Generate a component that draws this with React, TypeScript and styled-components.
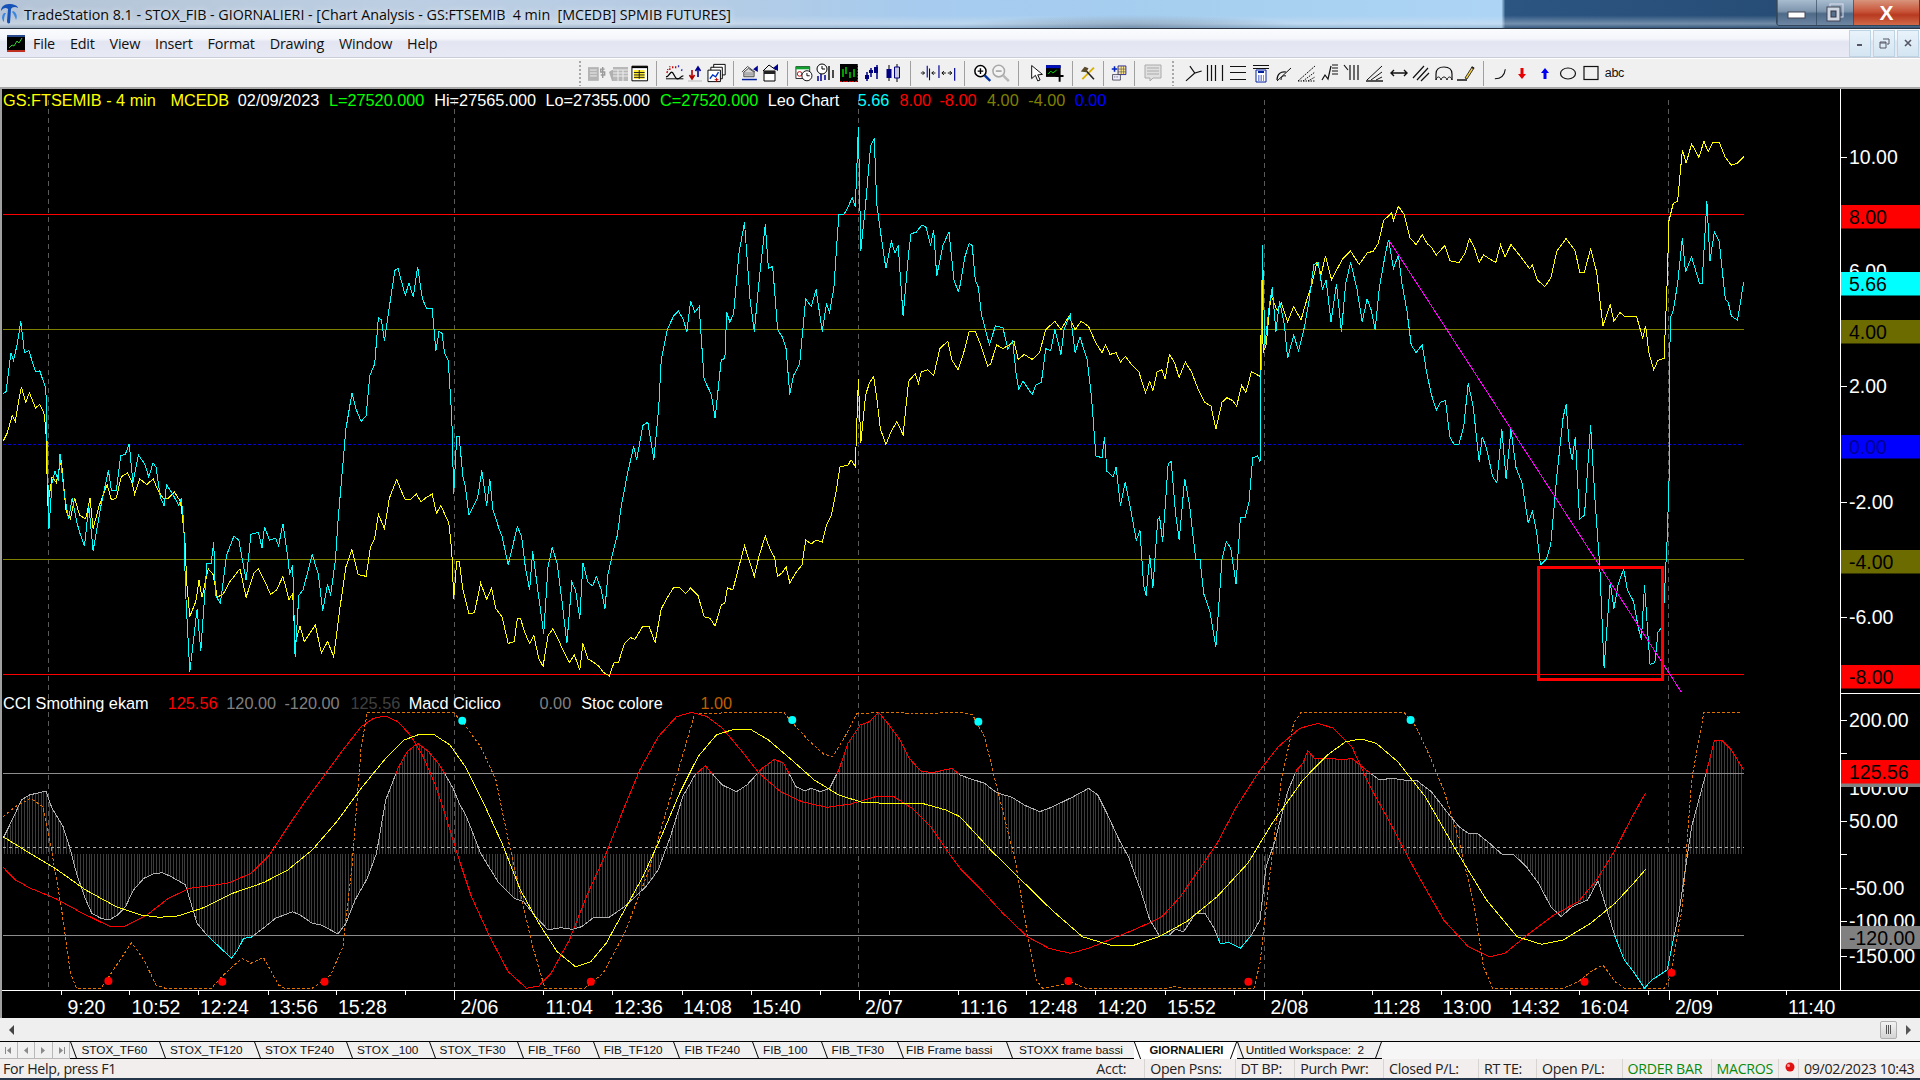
import React from "react";
import styled, { createGlobalStyle } from "styled-components";

const Global = createGlobalStyle`
  html, body { margin: 0; padding: 0; background: #000; overflow: hidden; }
  #root { width: 1920px; height: 1080px; }
`;

const UI = `"Open Sans", "Noto Sans", "Liberation Sans", sans-serif`;
const ARIAL = `"Liberation Sans", Arial, sans-serif`;

const SX = 1568 / 960;
const lx = (x: number) => x / SX;
const rx = (x: number) => 960 + x / SX;
const ty = (y: number) => 100 + y / (1568 / 600);
const by = (y: number) => 680 + y / 3;

type P = [number, number];
const conv = (a: number[], fx: (n: number) => number, fy: (n: number) => number): P[] => {
  const o: P[] = [];
  for (let i = 0; i < a.length; i += 2) o.push([fx(a[i]), fy(a[i + 1])]);
  return o;
};
const pts = (p: P[]) => p.map(([x, y]) => `${x.toFixed(1)},${y.toFixed(1)}`).join(" ");

const cyanL = [5,767,10,762,18,660,22,680,28,640,34,578,40,660,47,655,58,710,65,708,75,755,77,900,80,1120,85,1000,90,970,95,995,98,925,105,1030,112,1095,118,1040,125,1100,130,1130,138,1165,145,1060,152,1178,165,1060,177,968,182,1020,190,1020,197,930,205,925,211,898,217,1000,226,928,236,950,243,985,250,948,255,960,262,1040,268,1060,272,1005,282,1030,292,1060,296,1040,300,1100,303,1280,310,1495,322,1330,328,1440,338,1210,345,1210,349,1155,352,1295,360,1315,370,1190,382,1140,390,1150,402,1255,410,1135,422,1130,428,1170,432,1115,440,1150,450,1145,455,1165,462,1107,470,1195,473,1240,478,1215,482,1455,488,1295,495,1280,510,1188,520,1240,527,1335,535,1265,540,1295,548,1200,552,1100,565,860,575,765,582,810,590,840,598,825,604,720,612,690,618,568,623,575,628,630,636,540,645,445,650,440,655,470,662,510,668,478,675,515,682,436,690,520,697,545,706,545,712,655,717,605,722,610,726,660,732,680,738,830,741,1030,746,880,750,880,756,985,760,1010,766,1085,774,1060,780,1040,787,968,795,1060,800,990,805,1070,815,1120,820,1140,830,1215,845,1115,852,1140,858,1220,865,1280,870,1180,880,1300,888,1395,895,1220,902,1170,910,1210,918,1310,926,1420,934,1260,940,1280,947,1355,952,1210,960,1260,968,1270,974,1245,982,1280,988,1330,993,1240,1000,1190,1008,1140,1015,1060,1025,975,1035,905,1040,940,1050,850,1058,842,1068,940,1076,800,1080,680,1090,600,1100,565,1108,552,1115,570,1122,605,1128,525,1135,555,1142,540,1150,730,1162,770,1168,832,1178,680,1184,675,1187,555,1192,580,1198,560,1207,400,1216,320,1225,520,1232,605,1240,470,1250,325,1255,440,1262,435,1270,600,1278,620,1284,650,1290,770,1296,720,1306,690,1316,520,1325,540,1333,495,1343,605,1350,532,1355,555,1362,490,1370,300,1378,300,1385,280,1392,255,1397,280,1402,70,1406,395,1414,270,1422,120,1428,100,1432,270,1436,320,1440,365,1447,440,1456,370,1462,400,1467,380,1475,565,1484,400,1488,350,1497,345,1505,328,1512,330,1520,380,1525,340,1530,460,1540,380,1550,345,1558,470,1565,500];
const cyanR = [0,485,8,410,15,375,20,380,25,470,30,490,35,560,40,590,48,640,58,590,70,595,78,650,86,630,92,720,96,755,103,735,118,770,124,745,133,738,140,650,148,655,155,600,165,665,170,600,180,560,188,660,196,620,208,680,215,780,222,930,232,935,236,880,240,970,250,985,255,960,262,1060,270,998,280,1080,288,1150,294,1125,300,1270,304,1295,310,1190,315,1275,323,1095,326,1090,331,1155,340,950,345,945,352,1080,358,1150,367,990,375,1060,385,1200,392,1200,398,1290,408,1335,418,1430,428,1200,435,1155,442,1170,451,1265,458,1090,466,1090,472,1050,478,935,486,930,490,945,494,380,498,640,505,540,510,490,516,605,522,525,530,590,535,675,545,615,553,655,563,590,570,525,578,430,585,425,592,495,598,470,606,580,615,480,623,605,630,480,638,425,648,490,657,580,665,520,672,550,678,600,685,490,695,400,700,365,708,440,716,405,722,480,730,550,737,640,745,660,755,640,762,710,770,770,778,810,785,790,793,785,800,880,807,900,815,900,823,850,830,740,838,800,848,945,853,880,860,910,870,985,877,1000,885,860,892,990,900,860,908,960,918,1000,928,1105,935,1075,942,1130,948,1215,958,1200,965,1160,975,980,985,830,990,795,995,900,1000,940,1005,880,1012,1095,1020,1085,1030,850,1037,1040,1045,1220,1052,1485,1062,1260,1068,1330,1075,1265,1084,1225,1090,1280,1100,1310,1108,1380,1113,1410,1118,1268,1127,1475,1135,1470,1140,1390,1148,1375,1155,1150,1158,1000,1160,570,1165,550,1172,480,1180,360,1185,450,1195,410,1208,480,1212,480,1220,265,1225,420,1232,345,1240,370,1250,520,1255,530,1260,565,1270,575,1280,475];
const yelL = [5,892,12,870,20,825,25,840,30,790,35,750,42,790,48,765,58,805,65,795,72,820,75,860,78,1060,85,985,92,1000,100,940,108,1075,115,1095,122,1040,130,1085,140,1095,147,1040,152,1120,162,1060,175,1005,182,1045,190,1040,198,985,208,975,215,995,220,1030,228,990,240,1005,250,990,258,1020,266,1040,275,1040,285,1025,295,1050,302,1150,305,1260,310,1350,320,1310,325,1255,330,1300,340,1225,348,1240,355,1300,365,1290,375,1260,392,1225,402,1300,415,1235,422,1225,433,1260,442,1292,452,1280,462,1245,472,1305,478,1290,482,1420,490,1375,497,1415,515,1372,525,1445,535,1415,545,1455,555,1330,565,1220,575,1175,585,1240,598,1245,605,1170,612,1145,618,1083,628,1120,636,1040,648,992,655,1020,662,1045,670,1045,680,1030,688,1050,695,1040,706,1030,713,1080,720,1060,733,1105,738,1180,741,1305,746,1205,750,1205,756,1280,766,1342,775,1340,785,1262,795,1305,803,1275,810,1330,820,1350,830,1420,840,1415,845,1355,850,1355,858,1395,865,1420,872,1400,880,1460,887,1480,895,1400,903,1382,912,1410,920,1440,930,1470,938,1450,947,1490,952,1420,960,1460,970,1470,978,1480,985,1495,995,1505,1003,1470,1010,1470,1020,1420,1030,1405,1037,1410,1050,1375,1060,1375,1070,1418,1080,1330,1092,1295,1100,1275,1110,1275,1120,1290,1128,1275,1140,1295,1150,1350,1160,1355,1168,1375,1178,1320,1184,1315,1188,1275,1197,1280,1205,1230,1216,1165,1225,1210,1232,1245,1240,1190,1250,1140,1258,1175,1265,1195,1270,1245,1278,1235,1284,1220,1290,1262,1300,1235,1310,1215,1316,1150,1325,1160,1333,1150,1343,1155,1350,1110,1358,1085,1365,1030,1372,958,1385,955,1390,940,1397,958,1402,730,1406,895,1414,770,1420,740,1427,722,1433,790,1438,860,1447,900,1456,865,1465,840,1475,875,1484,735,1495,715,1500,740,1505,710,1515,705,1525,720,1535,650,1548,630,1555,680,1565,705];
const yelR = [0,690,8,650,15,605,25,605,35,645,45,695,50,690,60,640,70,650,80,640,88,630,95,678,105,665,118,678,130,660,140,600,155,578,165,600,178,565,188,600,198,578,210,592,222,635,232,660,238,640,245,665,255,660,262,685,270,670,282,695,292,710,303,765,310,735,315,760,322,710,330,705,335,730,342,665,350,685,358,725,368,685,378,710,390,760,400,790,410,800,418,860,428,790,436,778,445,785,452,800,460,745,467,765,476,710,490,722,494,470,495,660,500,640,508,510,518,550,525,530,535,580,545,540,557,575,565,530,575,480,583,425,590,455,597,408,607,470,615,445,625,415,638,395,652,430,665,400,675,395,683,375,692,315,705,295,708,315,716,278,725,298,735,360,745,378,755,352,763,375,770,385,778,405,792,380,800,420,815,425,825,400,832,362,840,385,848,425,855,405,875,425,883,378,890,410,900,378,915,408,930,440,935,432,943,470,955,488,965,465,975,395,990,362,1005,395,1012,450,1020,450,1030,388,1040,450,1050,590,1062,535,1068,578,1078,555,1085,565,1105,565,1115,622,1120,590,1125,660,1133,705,1140,680,1150,675,1155,480,1158,315,1165,270,1172,265,1180,130,1186,165,1195,115,1207,150,1215,108,1222,135,1230,110,1240,110,1250,150,1260,170,1270,165,1280,148];
const macdL = [5,475,20,420,35,360,48,345,75,333,85,385,103,440,115,510,125,580,138,650,150,700,165,715,178,720,192,705,205,680,218,630,235,595,250,582,265,578,280,590,303,615,312,670,322,730,338,765,355,795,378,835,388,810,398,775,410,772,430,745,450,715,478,695,490,705,510,730,525,735,552,762,565,730,580,660,600,595,615,520,630,360,650,265,665,215,682,190,700,215,718,255,740,325,750,370,762,410,785,520,815,610,840,655,855,665,875,710,895,750,915,743,935,748,950,740,970,712,995,712,1020,680,1055,620,1075,570,1095,470,1115,350,1135,285,1152,257,1165,285,1180,315,1203,335,1220,315,1245,265,1265,238,1280,250,1300,320,1315,333,1325,325,1340,335,1355,325,1370,270,1385,190,1405,135,1420,125,1435,97,1450,130,1470,180,1485,235,1505,275,1525,277,1555,265,1568,285];
const macdR = [15,295,40,310,60,338,85,352,105,375,130,395,145,385,165,368,185,350,210,325,225,345,240,400,260,480,275,530,295,630,310,720,325,765,340,768,352,748,365,755,385,700,400,700,415,745,425,790,440,788,458,805,475,768,490,720,500,560,515,480,535,335,550,270,560,250,568,212,580,237,605,235,625,240,640,235,660,265,685,300,705,295,725,300,745,300,770,335,795,395,815,440,830,460,845,460,865,490,885,522,905,525,925,560,945,610,965,680,982,710,1000,680,1025,660,1042,602,1055,680,1070,770,1085,840,1100,875,1118,925,1130,900,1155,870,1165,780,1175,690,1195,440,1220,270,1232,182,1245,182,1260,210,1280,270];
const redL = [5,562,25,600,50,625,90,655,130,695,180,740,205,738,240,705,275,655,310,625,340,618,375,608,410,580,440,525,470,440,500,360,530,285,560,210,590,140,610,115,630,108,650,125,670,165,690,225,710,310,730,420,750,540,770,650,800,770,830,875,860,925,880,918,900,880,930,780,960,640,990,520,1020,380,1045,270,1075,170,1105,110,1130,97,1155,110,1180,145,1210,210,1240,280,1275,335,1310,365,1350,382,1390,372,1430,350,1460,350,1490,385,1520,440,1550,520,1568,565];
const redR = [30,620,70,700,110,770,145,805,180,820,210,805,250,775,290,745,330,710,360,650,390,570,420,490,450,385,490,270,520,200,555,145,585,130,610,145,640,200,670,320,700,420,740,560,790,720,830,800,865,830,890,820,930,760,970,705,1010,665,1040,600,1070,510,1095,420,1120,338];
const maL = [5,470,40,510,90,565,140,630,190,680,230,705,260,712,290,708,330,685,380,640,430,608,470,570,510,510,550,425,590,325,630,235,660,180,685,163,710,165,735,195,760,260,790,370,820,490,850,630,880,730,910,815,940,860,965,845,990,790,1020,690,1050,590,1080,470,1110,340,1140,230,1170,165,1200,147,1225,147,1255,180,1290,235,1330,300,1370,345,1410,368,1460,370,1510,372,1545,390,1568,410];
const maR = [50,510,100,600,150,690,200,770,245,795,285,795,325,770,370,725,420,650,470,550,510,430,560,300,600,225,630,185,655,177,680,190,715,245,760,350,810,510,860,660,910,770,950,793,985,780,1030,730,1070,670,1100,610,1120,568];
const stL = [5,410,25,380,50,355,70,380,85,520,100,680,115,880,125,925,165,925,185,870,215,788,235,840,255,915,270,925,345,925,365,885,395,835,410,850,430,832,455,915,465,925,510,925,540,885,560,800,575,560,590,200,600,97,740,97,755,125,785,200,810,300,830,480,850,640,870,800,890,925,955,925,985,880,1020,760,1060,570,1100,320,1135,100,1280,97,1295,130,1320,180,1345,222,1360,230,1380,170,1400,100,1470,97,1490,102,1568,97];
const stR = [20,103,40,170,60,320,90,540,110,760,125,900,135,925,165,915,180,905,205,925,340,925,350,920,365,925,480,925,490,850,505,600,525,300,545,130,557,97,725,97,745,140,765,220,790,330,815,480,840,680,855,860,870,925,985,925,1010,905,1030,875,1050,855,1070,905,1085,925,1150,925,1160,890,1180,680,1195,300,1215,97,1275,97];

const cyanLine = [...conv(cyanL, lx, ty), ...conv(cyanR, rx, ty)];
const yelLine = [...conv(yelL, lx, ty), ...conv(yelR, rx, ty)];
const macdLine = [...conv(macdL, lx, by), ...conv(macdR, rx, by)];
const redLine = [...conv(redL, lx, by), ...conv(redR, rx, by)];
const maLine = [...conv(maL, lx, by), ...conv(maR, rx, by)];
const stLine = [...conv(stL, lx, by), ...conv(stR, rx, by)];

const ZERO = 854;
const macdAt = (x: number) => {
  for (let i = 1; i < macdLine.length; i++) {
    const [x0, y0] = macdLine[i - 1];
    const [x1, y1] = macdLine[i];
    if (x >= x0 && x <= x1) return y0 + ((y1 - y0) * (x - x0)) / (x1 - x0 || 1);
  }
  return ZERO;
};
const histPath = (() => {
  let d = "";
  for (let x = 4; x < 1744; x += 2.82) {
    const px = Math.round(x) + 0.5;
    d += `M${px} ${ZERO}V${macdAt(x).toFixed(0)}`;
  }
  return d;
})();

const VLINES = [48, 454, 858.5, 1264, 1668.5];
const TIME_TICKS = [60.6, 129.2, 198.4, 267.6, 336.2, 405.4, 543, 612.3, 681.5, 750.7, 820, 889, 958, 1026, 1095, 1164.5, 1233.7, 1302, 1371.5, 1440.7, 1510, 1578.5, 1647.7, 1716.9, 1785.5];
const TIMES: [string, number][] = [["9:20",67.4],["10:52",131.6],["12:24",200],["13:56",269],["15:28",338],["2/06",460.5],["11:04",545.6],["12:36",614],["14:08",683],["15:40",752],["2/07",865],["11:16",960],["12:48",1028.6],["14:20",1097.8],["15:52",1167],["2/08",1270.5],["11:28",1373],["13:00",1442.5],["14:32",1511],["16:04",1580],["2/09",1675],["11:40",1788]];
const PRICE: [string, number][] = [["10.00",157.4],["6.00",271],["2.00",386],["-2.00",501.8],["-6.00",616.6],["200.00",720],["100.00",788],["50.00",821],["-50.00",887.7],["-100.00",920.7],["-150.00",956]];
const TAGS: [string, string, number, number][] = [
  ["8.00","#ff0000",205,23.5],["5.66","#00ffff",272,23.5],["4.00","#6b6b00",320,23.5],["0.00","#0000ff",435,23.5],["-4.00","#6b6b00",550,23.5],["-8.00","#ff0000",665,23.5],
  ["125.56","#ff0000",760,23.5],["-120.00","#808080",926,23],
];
const PLAIN_TICKS = [157.4, 386, 501.8, 616.6, 720, 752.7, 821, 854, 887.7, 920.7, 956];

const AxisText = styled.text`
  font-family: ${ARIAL};
  font-size: 19.5px;
  fill: ${(p: { $c?: string }) => p.$c ?? "#fff"};
  dominant-baseline: central;
`;

const ChartSvg = styled.svg`
  display: block;
  width: 1920px;
  height: 929px;
`;

function ChartDrawing() {
  return (
    <ChartSvg viewBox="0 89 1920 929">
      <defs>
        <clipPath id="cHi"><rect x="0" y="600" width="1760" height="173.7" /></clipPath>
        <clipPath id="cMid"><rect x="0" y="773.7" width="1760" height="162" /></clipPath>
        <clipPath id="cLo"><rect x="0" y="935.7" width="1760" height="60" /></clipPath>
      </defs>
      <rect x="0" y="89" width="1920" height="929" fill="#000" />
      <rect x="0" y="89" width="2" height="929" fill="#a0a0a0" />
      {VLINES.map((x) => (
        <line key={x} x1={x} x2={x} y1={100} y2={990} stroke="#5a5a5a" strokeDasharray="5 4" shapeRendering="crispEdges" />
      ))}
      <g shapeRendering="crispEdges" strokeWidth="1">
        <line x1="3" x2="1744" y1="214.5" y2="214.5" stroke="#ff0000" />
        <line x1="3" x2="1744" y1="329.5" y2="329.5" stroke="#808000" />
        <line x1="3" x2="1744" y1="444.5" y2="444.5" stroke="#0000e0" strokeDasharray="3 2" />
        <line x1="3" x2="1744" y1="559.5" y2="559.5" stroke="#808000" />
        <line x1="3" x2="1744" y1="674.5" y2="674.5" stroke="#ff0000" />
      </g>
      <g shapeRendering="crispEdges">
        <polyline points={pts(yelLine)} fill="none" stroke="#ffff00" strokeWidth="1" />
        <polyline points={pts(cyanLine)} fill="none" stroke="#00ffff" strokeWidth="1" />
        <line x1="1388.6" y1="239.7" x2="1681.3" y2="692" stroke="#ff00ff" strokeWidth="1" />
        <rect x="1538" y="567.5" width="124" height="111.5" fill="none" stroke="#ff0000" strokeWidth="3" />
        <path d={histPath} stroke="#3c3c3c" strokeWidth="1" fill="none" />
        <line x1="3" x2="1744" y1="773.5" y2="773.5" stroke="#8c8c8c" />
        <line x1="3" x2="1744" y1="935.5" y2="935.5" stroke="#8c8c8c" />
        <line x1="3" x2="1744" y1="847.5" y2="847.5" stroke="#b0b0b0" strokeDasharray="3 3" />
        <polyline points={pts(stLine)} fill="none" stroke="#e07000" strokeWidth="1" strokeDasharray="3 2" />
        <polyline points={pts(macdLine)} clipPath="url(#cHi)" fill="none" stroke="#ff0000" strokeWidth="1" />
        <polyline points={pts(macdLine)} clipPath="url(#cMid)" fill="none" stroke="#b0b0b0" strokeWidth="1" />
        <polyline points={pts(macdLine)} clipPath="url(#cLo)" fill="none" stroke="#00ffff" strokeWidth="1" />
        <polyline points={pts(redLine)} fill="none" stroke="#ff0000" strokeWidth="1" />
        <polyline points={pts(maLine)} fill="none" stroke="#ffff00" strokeWidth="1" />
      </g>
      {[[755,122],[1294,120]].map(([x,y]) => <ellipse key={x} cx={lx(x)} cy={by(y)} rx="4" ry="4" fill="#00ffff" />)}
      {[[30,125],[736,120]].map(([x,y]) => <ellipse key={x} cx={rx(x)} cy={by(y)} rx="4" ry="4" fill="#00ffff" />)}
      {[[177,903],[363,905],[530,905],[965,905]].map(([x,y]) => <ellipse key={x} cx={lx(x)} cy={by(y)} rx="4" ry="4" fill="#ff0000" />)}
      {[[177,903],[471,905],[1020,905],[1162,878]].map(([x,y]) => <ellipse key={x} cx={rx(x)} cy={by(y)} rx="4" ry="4" fill="#ff0000" />)}

      <g shapeRendering="crispEdges" stroke="#fff">
        <line x1="1840.5" x2="1840.5" y1="89" y2="990" />
        <line x1="1840" x2="1920" y1="693.5" y2="693.5" />
        <line x1="2" x2="1920" y1="990.5" y2="990.5" />
        {PLAIN_TICKS.map((y) => <line key={y} x1="1841" x2="1847" y1={Math.round(y) + 0.5} y2={Math.round(y) + 0.5} />)}
        {TIME_TICKS.map((x) => <line key={x} x1={Math.round(x) + 0.5} x2={Math.round(x) + 0.5} y1="991" y2="995" />)}
        {[454, 858.5, 1264, 1668.5].map((x) => <line key={x} x1={Math.round(x) + 0.5} x2={Math.round(x) + 0.5} y1="991" y2="1000" />)}
      </g>
      {PRICE.map(([t, y]) => <AxisText key={t} x="1849" y={y}>{t}</AxisText>)}
      <rect x="1841" y="783" width="79" height="4" fill="#808080" />
      {TAGS.map(([t, c, y, h]) => (
        <g key={t}>
          <rect x="1841" y={y} width="79" height={h} fill={c} />
          <AxisText x="1849" y={y + h / 2} $c={c === "#0000ff" ? "#000090" : "#000"}>{t}</AxisText>
        </g>
      ))}
      {TIMES.map(([t, x]) => <AxisText key={t} x={x} y="1006.5">{t}</AxisText>)}
    </ChartSvg>
  );
}

const Page = styled.div`
  width: 1920px;
  height: 1080px;
  display: flex;
  flex-direction: column;
  overflow: hidden;
  background: #f0f0f0;
`;

const TitleBar = styled.div`
  height: 28px;
  flex: none;
  display: flex;
  align-items: center;
  position: relative;
  background:
    radial-gradient(ellipse 170px 12px at 1130px 27px, rgba(80,100,125,.45), rgba(80,100,125,0)),
    linear-gradient(180deg, rgba(255,255,255,0) 55%, rgba(225,232,240,.4) 85%, rgba(90,110,130,.25) 100%),
    linear-gradient(90deg, #b4c4d6 0, #bccee2 20%, #b6cce4 36%, #a6cbee 48%, #a5ceef 62%, #add4f5 78.2%, #2c5582 78.4%, #24496f 100%);
`;
const TitleText = styled.span`
  font-family: ${UI};
  font-size: 14.3px;
  letter-spacing: -0.03px;
  color: #0a0a0a;
  white-space: pre;
  margin-left: 5px;
  text-shadow: 0 0 6px rgba(255,255,255,.9);
`;
const WinButtons = styled.div`
  margin-left: auto;
  align-self: flex-start;
  display: flex;
  height: 25px;
  border: 1px solid #33475c;
  border-top: none;
  border-radius: 0 0 0 4px;
  overflow: hidden;
`;
const WinBtn = styled.div<{ $w: number; $red?: boolean }>`
  width: ${(p) => p.$w}px;
  display: flex;
  align-items: center;
  justify-content: center;
  color: #fff;
  font-family: ${ARIAL};
  font-size: 21px;
  font-weight: bold;
  border-left: 1px solid rgba(40,60,80,.6);
  background: ${(p) =>
    p.$red
      ? "linear-gradient(180deg,#d8947c 0,#c8553a 45%,#b83a20 60%,#d06a48 100%)"
      : "linear-gradient(180deg,#a8bccf 0,#7e95ad 45%,#4d6a88 55%,#6d86a2 100%)"};
`;

const MenuBar = styled.div`
  height: 30px;
  flex: none;
  box-sizing: border-box;
  border-top: 1px solid #2a3342;
  border-bottom: 1px solid #c9cdd8;
  display: flex;
  align-items: center;
  padding-left: 7px;
  background: linear-gradient(180deg, #fafbfd 0, #f5f6fb 35%, #e3e6f2 45%, #e7e9f4 100%);
`;
const MenuItems = styled.div`
  display: flex;
  gap: 14.9px;
  margin-left: 8px;
  font-family: ${UI};
  font-size: 14.4px;
  letter-spacing: -0.2px;
  color: #111;
`;
const MdiButtons = styled.div`
  margin-left: auto;
  margin-right: 1px;
  display: flex;
  gap: 2px;
  height: 27px;
`;
const MdiBtn = styled.div`
  width: 22px;
  display: flex;
  align-items: center;
  justify-content: center;
  background: linear-gradient(180deg, #e8f2fa, #d4e6f2);
  border: 1px solid #bcd4e4;
  box-sizing: border-box;
`;

const Toolbar = styled.div`
  height: 31px;
  flex: none;
  box-sizing: border-box;
  display: flex;
  align-items: center;
  background: #f0f0f0;
  border-top: 1px solid #fff;
  border-bottom: 2px solid #a8a8a8;
`;
const Cell = styled.div<{ $w: number }>`
  width: ${(p) => p.$w}px;
  flex: none;
  height: 24px;
  display: flex;
  align-items: center;
  justify-content: center;
`;
const Sep = styled.div`
  width: 1px;
  height: 25px;
  background: #a0a0a0;
`;
const Grip = styled.div`
  width: 2px;
  height: 25px;
  background: repeating-linear-gradient(180deg, #a8a8a8 0 2px, transparent 2px 4px);
`;
const Abc = styled.span`
  font-family: ${ARIAL};
  font-size: 12.5px;
  letter-spacing: -0.4px;
  color: #111;
`;

const Chart = styled.div`
  position: relative;
  height: 929px;
  flex: none;
  background: #000;
`;
const Legend = styled.div<{ $top: number }>`
  position: absolute;
  left: 3px;
  top: ${(p) => p.$top}px;
  display: flex;
  font-family: ${ARIAL};
  font-size: 16.3px;
  line-height: 20px;
  white-space: nowrap;
`;
const LegendItem = styled.span<{ $c: string; $gap: number }>`
  color: ${(p) => p.$c};
  margin-left: ${(p) => p.$gap}px;
`;

const ScrollRow = styled.div`
  height: 23px;
  flex: none;
  display: flex;
  align-items: center;
  background: #efefef;
  padding: 0 8px;
`;
const ScrollThumb = styled.div`
  margin-left: auto;
  margin-right: 7px;
  width: 17px;
  height: 18px;
  box-sizing: border-box;
  display: flex;
  align-items: center;
  justify-content: center;
  gap: 1px;
  border: 1px solid #b0b0b0;
  border-radius: 2px;
  background: linear-gradient(180deg, #f2f2f2, #d4d4d4);
`;
const Grippy = styled.i`
  display: block;
  width: 1px;
  height: 9px;
  background: #555;
`;

const TabRow = styled.div`
  height: 18px;
  flex: none;
  box-sizing: border-box;
  display: flex;
  border-top: 1px solid #000;
  background: #f0f0f0;
  overflow: hidden;
`;
const NavBtn = styled.div`
  width: 17.6px;
  flex: none;
  display: flex;
  align-items: center;
  justify-content: center;
  box-sizing: border-box;
  border-right: 1px solid #b8b8b8;
  border-bottom: 1px solid #b8b8b8;
`;
const Tab = styled.div<{ $w: number; $pad: number; $active?: boolean; $last?: boolean }>`
  position: relative;
  width: ${(p) => p.$w}px;
  flex: none;
  box-sizing: border-box;
  padding-left: ${(p) => p.$pad}px;
  font-family: ${ARIAL};
  font-size: ${(p) => (p.$active ? 11.3 : 11.8)}px;
  line-height: 16px;
  font-weight: ${(p) => (p.$active ? 700 : 400)};
  color: #111;
  white-space: pre;
  border-bottom: ${(p) => (p.$active ? "none" : "1px solid #000")};
  background: ${(p) => (p.$active ? "#fff" : "transparent")};
  z-index: ${(p) => (p.$active ? 1 : 0)};
  &::before {
    content: "";
    position: absolute;
    left: 3px;
    top: -2px;
    bottom: -2px;
    width: 1px;
    background: #000;
    transform: skewX(20deg);
  }
  ${(p) =>
    p.$active || p.$last
      ? `&::after {
    content: "";
    position: absolute;
    right: 3px;
    top: -2px;
    bottom: -2px;
    width: 1px;
    background: #000;
    transform: skewX(-20deg);
  }`
      : ""}
`;
const TabFill = styled.div`
  flex: 1;
  background: #f6f6f6;
`;

const StatusBar = styled.div`
  height: 19px;
  flex: none;
  display: flex;
  align-items: center;
  background: #f2eeee;
  font-family: ${UI};
  font-size: 14.2px;
  letter-spacing: -0.3px;
  color: #222;
  white-space: nowrap;
`;
const HelpText = styled.span`
  margin-left: 3px;
  flex: 1;
`;
const Seg = styled.div<{ $w: number; $green?: boolean; $plain?: boolean }>`
  width: ${(p) => p.$w}px;
  flex: none;
  box-sizing: border-box;
  padding-left: ${(p) => (p.$plain ? 0 : 5)}px;
  height: 19px;
  line-height: 19px;
  border-left: ${(p) => (p.$plain ? "none" : "1px solid #d8d4d2")};
  color: ${(p) => (p.$green ? "#0a8a0a" : "#222")};
`;
const BottomEdge = styled.div`
  height: 2px;
  flex: none;
  background: #26364a;
`;

const S = ({ children }: { children: React.ReactNode }) => (
  <svg width="20" height="20" viewBox="0 0 20 20" fill="none">{children}</svg>
);

const ICONS: Record<string, React.ReactNode> = {
  docGray: <S><path d="M1 4h11v14H1z" fill="#b4b4b4" /><path d="M3 7h7M3 10h7M3 13h7" stroke="#eee" /><path d="M18 6h-4v3h4v3h-4M16 4v11" stroke="#9a9a9a" strokeWidth="1.4" /></S>,
  tableGray: <S><path d="M1 9l3-2h3v11H4z" fill="#b0b0b0" /><path d="M5 4h15v14H5z" fill="#b8b8b8" /><path d="M5 7h15M5 10h15M5 13h15M10 7v11M15 7v11" stroke="#eee" /></S>,
  tableYellow: <S><path d="M2 3h16v15H2z" fill="#fff" stroke="#000" /><path d="M2 3h16v2H2z" fill="#000" /><path d="M4 7h11v9H4z" fill="#ffea30" /><path d="M4 9.500h11M4 12h11M4 14.500h11M9.500 7v9" stroke="#222" /></S>,
  wave: <S><path d="M2 10l1-4M5 7l0-4M8 5l0-3M11 5l0-3" stroke="#c00000" strokeWidth="1.4" strokeDasharray="2 1" /><path d="M14 4l0-2M17 8l1-3" stroke="#3030c0" strokeWidth="1.4" strokeDasharray="2 1" /><path d="M1 16h18" stroke="#000" /><path d="M1 14c3 0 4-5 6-5s3 7 6 7 3-3 6-3" stroke="#000" strokeWidth="1.3" /></S>,
  arrows: <S><path d="M7 7v8M4.500 12L7 16l2.500-4" stroke="#b00000" strokeWidth="1.6" /><path d="M13 14V5M10.500 8L13 4l2.500 4" stroke="#000090" strokeWidth="1.6" /><path d="M3 18h14" stroke="#bbb" /></S>,
  stack: <S><path d="M7 1h12v11H7z" fill="#fff" stroke="#000" /><path d="M4 4h12v12H4z" fill="#fff" stroke="#000" /><path d="M1 7h13v12H1z" fill="#fff" stroke="#000" /><path d="M3 16l3-4 3 2 3-5" stroke="#0030c0" strokeWidth="1.4" /><path d="M8 17h4M10 15v4" stroke="#c00000" /></S>,
  envA: <S><path d="M1 9l6-6 8 6" stroke="#444" /><path d="M3 9l5-4 6 4v5H3z" fill="#d8d8d8" stroke="#444" /><path d="M3 10h11M3 12h11" stroke="#888" /><path d="M1 17h16" stroke="#0020a0" strokeWidth="1.6" /><path d="M18 2v7l-5-3z" fill="#000090" /></S>,
  envB: <S><path d="M4 8h11v10H4z" fill="#fff" stroke="#000" /><path d="M3 8l6-6 7 5" stroke="#000" /><path d="M4 8h11v3H4z" fill="#222" /><path d="M18 1v7l-5-3z" fill="#000090" /></S>,
  cal: <S><path d="M1 3h15v13H1z" fill="#fff" stroke="#222" /><path d="M1 3h15v3H1z" fill="#10a030" /><circle cx="5" cy="11" r="2.500" stroke="#c00000" /><circle cx="13" cy="13" r="5.500" fill="#fff" stroke="#000" /><path d="M13 10v3h3" stroke="#000" /></S>,
  clockBars: <S><circle cx="7" cy="6" r="5" fill="#fff" stroke="#000" /><path d="M7 3v3h3" stroke="#000" /><path d="M3 13v5M6 11v7M10 12v5" stroke="#000090" strokeWidth="1.5" /><path d="M14 3v14M18 7v8" stroke="#222" strokeWidth="1.6" /></S>,
  blackChart: <S><rect x="1" y="1" width="18" height="18" fill="#000" /><path d="M4 6v8M7 4v7M11 9v6M15 6v8" stroke="#00e000" strokeWidth="1.4" /><path d="M1 18.500h18M18.500 1v18" stroke="#e00000" strokeDasharray="2 1" /></S>,
  blueBars: <S><path d="M5 9v9M9 5v9M15 2v14" stroke="#000080" strokeWidth="1.5" /><path d="M3 12h4v4H3zM12 4h4v6h-4z" fill="#000080" /><path d="M7 7h4v3H7z" fill="#000080" /></S>,
  candles: <S><path d="M6 2v16M14 1v18" stroke="#000" /><path d="M3.500 6h5v9h-5z" fill="#000080" /><path d="M11.500 4h5v11h-5z" fill="#c8c8e0" stroke="#000080" /></S>,
  inL: <S><path d="M2 10h4M4 8l2 2-2 2M14 10h4M16 8l-2 2 2 2" stroke="#000" /><path d="M9 2v13M11.500 5v13" stroke="#000090" strokeWidth="1.2" /></S>,
  outL: <S><path d="M2 2v13" stroke="#000090" strokeWidth="1.2" /><path d="M5 10h4M7 8l-2 2 2 2M11 10h4M13 8l2 2-2 2" stroke="#000" /><path d="M18 5v13" stroke="#000090" strokeWidth="1.2" /></S>,
  zoomIn: <S><circle cx="8" cy="8" r="6" fill="#fff" stroke="#000" strokeWidth="1.6" /><path d="M5 8h6M8 5v6" stroke="#000" strokeWidth="1.5" /><path d="M12.500 12.500l6 6" stroke="#0030a0" strokeWidth="2.600" /></S>,
  zoomOut: <S><circle cx="8" cy="8" r="6" fill="#f4f4f4" stroke="#a8a8a8" strokeWidth="1.6" /><path d="M5 8h6" stroke="#a0a0a0" strokeWidth="1.6" /><path d="M12.500 12.500l6 6" stroke="#b8b8b8" strokeWidth="2.600" /></S>,
  cursor: <S><path d="M5 2v14l4-3.500 2.500 6 2.500-1-2.500-5.500 5-.5z" fill="#fff" stroke="#000" /></S>,
  chartT: <S><rect x="1" y="2" width="15" height="12" fill="#000" /><path d="M1 2h15v3H1z" fill="#0010c0" /><path d="M3 11l3-3 2 2 4-3" stroke="#00e000" /><path d="M11 12h8v2h-3v5h-2v-5h-3z" fill="#000" /></S>,
  hammer: <S><path d="M3 18L18 3" stroke="#d8b000" strokeWidth="2.400" /><path d="M7 6l11 12" stroke="#222" strokeWidth="2" /><path d="M1 8l5-6 5 2-3 5z" fill="#5a4a2a" /></S>,
  addCols: <S><path d="M9 1h10v11H9z" fill="#ffe890" stroke="#000090" /><path d="M9 5h10M9 8.500h10M13 1v11M16 1v11" stroke="#555" strokeWidth=".8" /><path d="M1 5h7M4.500 1.500v7" stroke="#0020c0" strokeWidth="2" /><path d="M2 12h10v7H2z" fill="#eef" stroke="#334" /><path d="M4 15h6" stroke="#334" strokeDasharray="1 1" /></S>,
  note: <S><path d="M2 2h16v13h-8l-3 3v-3H2z" fill="#e0e0e0" stroke="#aaa" /><path d="M4 5h12M4 8h12M4 11h12" stroke="#aaa" /></S>,
  fork: <S><path d="M2 18l9-8M6 3l5 7 7-2" stroke="#111" strokeWidth="1.2" /></S>,
  vlines: <S><path d="M2.500 2v16M6.500 2v16M10.500 2v16M17.500 2v16" stroke="#111" strokeWidth="1.2" /></S>,
  hlines: <S><path d="M2 3.500h16M2 9.500h16M2 16.500h16" stroke="#111" strokeWidth="1.2" /></S>,
  calc: <S><path d="M2 2.500h16M2 5.500h16" stroke="#111" /><path d="M5 7h10v12H5z" fill="#fff" stroke="#0020a0" /><path d="M7 9h6" stroke="#0020a0" strokeWidth="2" /><path d="M7 13h6M7 15h6M7 17h6" stroke="#0020a0" strokeDasharray="1.500 1" /></S>,
  arc: <S><path d="M3 17c0-6 4-9 9-8" stroke="#111" strokeWidth="1.2" /><path d="M7 17c0-3 2-5 5-4M3 18L17 5" stroke="#111" /></S>,
  fan: <S><path d="M1 18h17" stroke="#111" strokeDasharray="1.500 1" /><path d="M1 18L18 3" stroke="#111" strokeDasharray="2 1" /><path d="M6 18L18 9M11 18l7-4" stroke="#111" strokeDasharray="1.500 1" /></S>,
  fibRet: <S><path d="M2 17l3-5 3 4 3-13" stroke="#111" strokeWidth="1.2" /><path d="M12 2h6M12 5h6M12 8h6M12 11h6" stroke="#111" /></S>,
  fibTime: <S><path d="M2 2l4 5M8 2v15M12 2v15M16 2v15" stroke="#111" strokeWidth="1.2" /></S>,
  fanB: <S><path d="M1 18h17" stroke="#111" strokeWidth="1.400" /><path d="M2 17L17 3M6 17l11-8M11 17l6-3" stroke="#111" /></S>,
  hArrow: <S><path d="M2 10h16M5 7l-3 3 3 3M15 7l3 3-3 3" stroke="#111" strokeWidth="1.400" /></S>,
  channel: <S><path d="M2 15L13 3M6 17L17 5M10 18l8-8" stroke="#111" strokeWidth="1.2" /></S>,
  bell: <S><path d="M2 17V11c0-5 3-7 8-7s8 2 8 7v6" stroke="#111" strokeWidth="1.2" /><path d="M2 17c1-4 4-4 5 0M7 17c1-4 5-4 6 0M13 17c1-4 4-4 5 0" stroke="#111" /></S>,
  pencil: <S><path d="M1 17h10" stroke="#000" strokeWidth="1.400" /><path d="M9 15L16 4l2 1-7 11z" fill="#f8d040" stroke="#222" strokeWidth=".9" /><path d="M15.500 4l2.500 1.500" stroke="#222" strokeWidth="1.800" /></S>,
  curve: <S><path d="M3 16c6 0 10-2 11-10" stroke="#111" strokeWidth="1.200" /></S>,
  down: <S><path d="M8.500 5h3v6h2.500L10 16l-4-5h2.500z" fill="#e80000" /></S>,
  up: <S><path d="M8.500 16h3v-6h2.500L10 5 6 10h2.500z" fill="#0000f0" /></S>,
  circle: <S><ellipse cx="10" cy="10.500" rx="7.500" ry="5.500" stroke="#111" strokeWidth="1.200" /></S>,
  rect: <S><rect x="3" y="3.500" width="14" height="13" stroke="#111" strokeWidth="1.200" /></S>,
};

type TItem = { x: number; k: string };
const TB: TItem[] = [
  { x: 579, k: "grip" }, { x: 594.3, k: "docGray" }, { x: 618.3, k: "tableGray" }, { x: 641, k: "tableYellow" }, { x: 657.3, k: "sep" },
  { x: 672.3, k: "wave" }, { x: 696, k: "arrows" }, { x: 717.7, k: "stack" }, { x: 734.3, k: "sep" }, { x: 748.3, k: "envA" }, { x: 771.7, k: "envB" },
  { x: 788.3, k: "sep" }, { x: 802.3, k: "cal" }, { x: 825, k: "clockBars" }, { x: 849.3, k: "blackChart" }, { x: 871.7, k: "blueBars" }, { x: 895, k: "candles" },
  { x: 911.7, k: "sep" }, { x: 925.7, k: "inL" }, { x: 948.3, k: "outL" }, { x: 965, k: "sep" }, { x: 980.7, k: "zoomIn" }, { x: 1002.3, k: "zoomOut" },
  { x: 1019.3, k: "sep" }, { x: 1034.3, k: "cursor" }, { x: 1056.7, k: "chartT" }, { x: 1073.3, k: "sep" }, { x: 1087.7, k: "hammer" }, { x: 1104.3, k: "sep" },
  { x: 1119, k: "addCols" }, { x: 1135.7, k: "sep" }, { x: 1150, k: "note" }, { x: 1175.7, k: "grip" }, { x: 1192.3, k: "fork" }, { x: 1215, k: "vlines" },
  { x: 1238.3, k: "hlines" }, { x: 1260.7, k: "calc" }, { x: 1284, k: "arc" }, { x: 1306.7, k: "fan" }, { x: 1330, k: "fibRet" }, { x: 1352.3, k: "fibTime" },
  { x: 1375.7, k: "fanB" }, { x: 1399, k: "hArrow" }, { x: 1422.3, k: "channel" }, { x: 1443, k: "bell" }, { x: 1468, k: "pencil" }, { x: 1484.8, k: "sep" },
  { x: 1499, k: "curve" }, { x: 1522.8, k: "down" }, { x: 1545.4, k: "up" }, { x: 1568, k: "circle" }, { x: 1590.7, k: "rect" }, { x: 1614.6, k: "abc" },
];

function ToolbarIcons() {
  const first = TB[0].x - 6;
  return (
    <>
      <Cell $w={first} />
      {TB.map((it, i) => {
        const left = i === 0 ? first : (TB[i - 1].x + it.x) / 2;
        const right = i === TB.length - 1 ? it.x + 12 : (it.x + TB[i + 1].x) / 2;
        return (
          <Cell key={i} $w={right - left}>
            {it.k === "sep" ? <Sep /> : it.k === "grip" ? <Grip /> : it.k === "abc" ? <Abc>abc</Abc> : ICONS[it.k]}
          </Cell>
        );
      })}
    </>
  );
}

const TOP_LEGEND: [string, string, number][] = [
  ["GS:FTSEMIB - 4 min", "#ffff00", 0], ["MCEDB", "#ffff00", 14.5], ["02/09/2023", "#ffffff", 8.6], ["L=27520.000", "#00ff00", 9.6], ["Hi=27565.000", "#ffffff", 9.8],
  ["Lo=27355.000", "#ffffff", 9.4], ["C=27520.000", "#00ff00", 10], ["Leo Chart", "#ffffff", 9.4], ["5.66", "#00ffff", 18.5], ["8.00", "#ff0000", 10], ["-8.00", "#ff0000", 8.3],
  ["4.00", "#808000", 10.5], ["-4.00", "#808000", 9.5], ["0.00", "#0000ff", 9.3],
];
const BOT_LEGEND: [string, string, number][] = [
  ["CCI Smothing ekam", "#ffffff", 0], ["125.56", "#ff0000", 19], ["120.00", "#808080", 8.8], ["-120.00", "#808080", 8.3], ["125.56", "#404040", 10.8],
  ["Macd Ciclico", "#ffffff", 8.4], ["0.00", "#808080", 38.6], ["Stoc colore", "#ffffff", 10], ["1.00", "#c06000", 37.8],
];
const TABS: [string, number, number][] = [
  ["STOX_TF60", 88.6, 11], ["STOX_TF120", 95, 11], ["STOX TF240", 92, 11], ["STOX _100", 82.6, 11], ["STOX_TF30", 88.4, 11], ["FIB_TF60", 75.7, 11], ["FIB_TF120", 80.8, 11], ["FIB TF240", 78.5, 11],
  ["FIB_100", 68.6, 11], ["FIB_TF30", 76.4, 11], ["FIB Frame bassi", 109, 9], ["STOXX frame bassi", 128.5, 13], ["GIORNALIERI", 102.3, 15], ["Untitled Workspace:  2", 145.7, 9],
];
const STATUS: [string, number, boolean?][] = [
  ["Open Psns:", 90.3], ["DT BP:", 59.7], ["Purch Pwr:", 88.8], ["Closed P/L:", 95], ["RT TE:", 58.1], ["Open P/L:", 85.4], ["ORDER BAR", 89, true], ["MACROS", 67.5, true],
];

function Logo() {
  return (
    <svg width="19" height="22" viewBox="0 0 19 22">
      <path d="M9 1c5 0 9 2 9 4-3-2-6-1-7 1l-1 14c-2 1-3 0-3-2l1-12C6 4 3 5 1 8 1 4 4 1 9 1z" fill="#1552b8" />
      <path d="M4 10c-2 2-3 6 0 9 0-3 0-6 2-9zM13 8c3 1 5 5 3 9-1-3-2-6-4-8z" fill="#3a86e0" />
    </svg>
  );
}

function NavTri({ dir, bar }: { dir: "l" | "r"; bar?: boolean }) {
  return (
    <svg width="9" height="9" viewBox="0 0 9 9">
      {dir === "l" ? <path d="M7 1v7L3 4.500z" fill="#8a8a8a" /> : <path d="M2 1v7l4-3.500z" fill="#8a8a8a" />}
      {bar && <path d={dir === "l" ? "M1.500 1v7" : "M7.500 1v7"} stroke="#8a8a8a" />}
    </svg>
  );
}

export default function App() {
  return (
    <Page>
      <Global />
      <TitleBar>
        <Logo />
        <TitleText>TradeStation 8.1 - STOX_FIB - GIORNALIERI - [Chart Analysis - GS:FTSEMIB  4 min  [MCEDB] SPMIB FUTURES]</TitleText>
        <WinButtons>
          <WinBtn $w={38}>
            <svg width="20" height="12"><rect x="1" y="5" width="17" height="6" fill="#fff" stroke="#445" /></svg>
          </WinBtn>
          <WinBtn $w={36}>
            <svg width="20" height="20"><rect x="5" y="1" width="13" height="13" fill="none" stroke="#dde" /><rect x="2" y="4" width="13" height="14" fill="#cfd8e2" stroke="#445" /><rect x="6" y="8" width="5" height="6" fill="#56708c" stroke="#334" /></svg>
          </WinBtn>
          <WinBtn $w={65} $red>X</WinBtn>
        </WinButtons>
      </TitleBar>

      <MenuBar>
        <svg width="18" height="17" viewBox="0 0 18 17">
          <rect width="18" height="17" fill="#000" />
          <rect width="18" height="2" fill="#2a4a90" />
          <path d="M2 13l3-3 2 1 3-5 2 2 3-5" stroke="#30d030" fill="none" />
          <rect y="15" width="18" height="2" fill="#c03020" />
        </svg>
        <MenuItems>
          {["File", "Edit", "View", "Insert", "Format", "Drawing", "Window", "Help"].map((m) => <span key={m}>{m}</span>)}
        </MenuItems>
        <MdiButtons>
          <MdiBtn><svg width="10" height="10"><path d="M2 7h5" stroke="#556" strokeWidth="2" /></svg></MdiBtn>
          <MdiBtn><svg width="11" height="11"><path d="M4 1h6v5H8M1 4h6v6H1zM1 5h6" stroke="#556" fill="none" /></svg></MdiBtn>
          <MdiBtn><svg width="10" height="10"><path d="M2 2l6 6M8 2L2 8" stroke="#556" strokeWidth="1.600" /></svg></MdiBtn>
        </MdiButtons>
      </MenuBar>

      <Toolbar><ToolbarIcons /></Toolbar>

      <Chart>
        <ChartDrawing />
        <Legend $top={1}>
          {TOP_LEGEND.map(([t, c, g], i) => <LegendItem key={i} $c={c} $gap={g}>{t}</LegendItem>)}
        </Legend>
        <Legend $top={604}>
          {BOT_LEGEND.map(([t, c, g], i) => <LegendItem key={i} $c={c} $gap={g}>{t}</LegendItem>)}
        </Legend>
      </Chart>

      <ScrollRow>
        <svg width="8" height="12"><path d="M6 1v10L1 6z" fill="#444" /></svg>
        <ScrollThumb><Grippy /><Grippy /><Grippy /></ScrollThumb>
        <svg width="8" height="12"><path d="M2 1v10l5-5z" fill="#555" /></svg>
      </ScrollRow>

      <TabRow>
        <NavBtn><NavTri dir="l" bar /></NavBtn>
        <NavBtn><NavTri dir="l" /></NavBtn>
        <NavBtn><NavTri dir="r" /></NavBtn>
        <NavBtn><NavTri dir="r" bar /></NavBtn>
        {TABS.map(([t, w, pad], i) => (
          <Tab key={t} $w={w} $pad={pad} $active={t === "GIORNALIERI"} $last={i === TABS.length - 1}>{t}</Tab>
        ))}
        <TabFill />
      </TabRow>

      <StatusBar>
        <HelpText>For Help, press F1</HelpText>
        <Seg $w={48} $plain>Acct:</Seg>
        {STATUS.map(([t, w, g]) => <Seg key={t} $w={w} $green={g}>{t}</Seg>)}
        <Seg $w={20}>
          <svg width="12" height="12" viewBox="0 0 12 12"><circle cx="6" cy="5" r="4.500" fill="#e01010" /><circle cx="4.500" cy="3.500" r="1.500" fill="#ffa0a0" /></svg>
        </Seg>
        <Seg $w={122}>09/02/2023 10:43</Seg>
      </StatusBar>
      <BottomEdge />
    </Page>
  );
}
